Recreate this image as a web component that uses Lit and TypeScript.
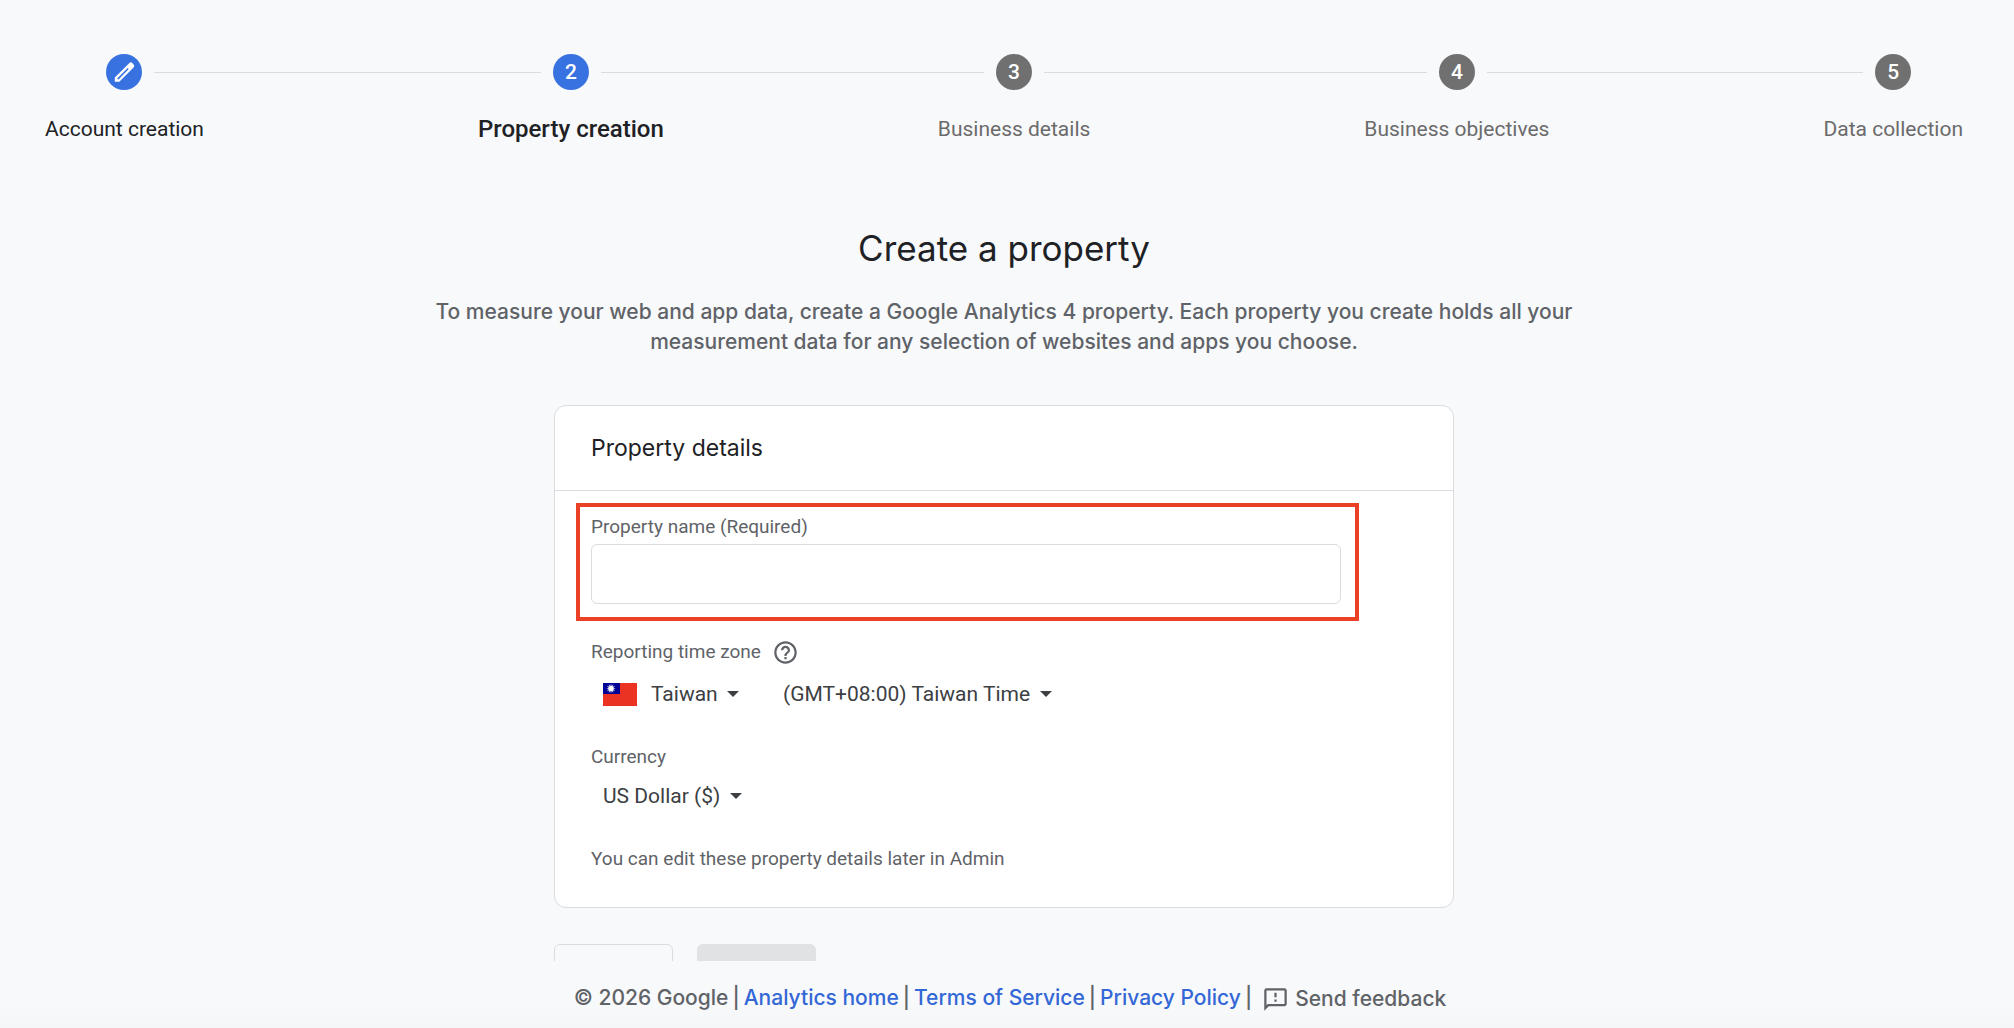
import { LitElement, html, css, svg, nothing } from "lit";
import { customElement, property } from "lit/decorators.js";
import { classMap } from "lit/directives/class-map.js";

type StepState = "done" | "current" | "upcoming";

interface Step {
  label: string;
  state: StepState;
}

const STEPS: Step[] = [
  { label: "Account creation", state: "done" },
  { label: "Property creation", state: "current" },
  { label: "Business details", state: "upcoming" },
  { label: "Business objectives", state: "upcoming" },
  { label: "Data collection", state: "upcoming" },
];

const LINKS = ["Analytics home", "Terms of Service", "Privacy Policy"];

const pencilIcon = html`<svg viewBox="0 0 24 24" width="26" height="26" aria-hidden="true">
  <path
    fill="currentColor"
    fill-rule="evenodd"
    d="M18.300 3.100a1.800 1.800 0 0 0-1.300.5L3.500 17V21h4.200L21 7.700a1.800 1.800 0 0 0 0-2.500L19.600 3.600a1.800 1.800 0 0 0-1.300-.5zM15.400 8.300l1 1L7.200 18.700H5.900v-1z"
  />
</svg>`;

const helpIcon = html`<svg viewBox="0 0 24 24" width="27" height="27" aria-hidden="true">
  <path
    fill="currentColor"
    d="M11 18h2v-2h-2v2zm1-16C6.480 2 2 6.480 2 12s4.480 10 10 10 10-4.480 10-10S17.520 2 12 2zm0 18c-4.410 0-8-3.590-8-8s3.590-8 8-8 8 3.590 8 8-3.590 8-8 8zm0-14c-2.210 0-4 1.790-4 4h2c0-1.100.9-2 2-2s2 .9 2 2c0 2-3 1.750-3 5h2c0-2.250 3-2.500 3-5 0-2.210-1.790-4-4-4z"
  />
</svg>`;

const feedbackIcon = html`<svg viewBox="0 0 24 24" width="27" height="27" aria-hidden="true">
  <path
    fill="currentColor"
    d="M20 2H4c-1.100 0-1.990.9-1.990 2L2 22l4-4h14c1.100 0 2-.9 2-2V4c0-1.100-.9-2-2-2zm0 14H5.170L4 17.170V4h16v12zM11 12h2v2h-2zm0-6h2v4h-2z"
  />
</svg>`;

const rays = Array.from({ length: 12 }, (_, i) => {
  const a = (i * Math.PI) / 6;
  const w = 0.26;
  const p = (r: number, t: number) => `${8 + r * Math.sin(t)},${5.5 - r * Math.cos(t)}`;
  return svg`<polygon fill="#fff" points="${p(4.8, a)} ${p(2.4, a + w)} ${p(2.4, a - w)}" />`;
});

const flagIcon = html`<svg viewBox="0 0 34 23" width="34" height="23" aria-hidden="true">
  <rect width="34" height="23" fill="#ea3323" />
  <rect width="17" height="11" fill="#000095" />
  ${rays}
  <circle cx="8" cy="5.5" r="2.6" fill="#fff" />
</svg>`;

@customElement("setup-stepper")
export class SetupStepper extends LitElement {
  @property({ attribute: false }) steps: Step[] = [];

  static styles = css`
    :host {
      display: block;
    }
    .steps {
      display: flex;
      margin: 0;
      padding: 0;
      list-style: none;
    }
    .step {
      flex: none;
      color: #6b6b6b;
    }
    .marker {
      display: flex;
      align-items: center;
      gap: 12px;
      margin-bottom: 24px;
    }
    .marker::before,
    .marker::after {
      content: "";
      flex: 1;
      height: 1px;
      background: #dadce0;
    }
    .step:first-child .marker::before,
    .step:last-child .marker::after {
      background: transparent;
    }
    .connector {
      flex: 1;
      height: 36px;
      display: flex;
      align-items: center;
    }
    .connector::before {
      content: "";
      flex: 1;
      height: 1px;
      background: #dadce0;
    }
    .circle {
      display: grid;
      place-items: center;
      width: 36px;
      height: 36px;
      border-radius: 50%;
      background: #707070;
      color: #fff;
      font-size: 21px;
      font-weight: 500;
      line-height: 36px;
    }
    .done .circle,
    .current .circle {
      background: #3871e0;
    }
    .label {
      font-size: 21px;
      line-height: 30px;
      white-space: nowrap;
    }
    .done .label,
    .current .label {
      color: #202124;
    }
    .current .label {
      font-size: 24px;
      font-weight: 500;
    }
  `;

  render() {
    return html`<ol class="steps">
      ${this.steps.map(
        (s, i) => html`${i > 0 ? html`<li class="connector" role="presentation"></li>` : nothing}
          <li
            class=${classMap({ step: true, [s.state]: true })}
            aria-current=${s.state === "current" ? "step" : nothing}
          >
            <div class="marker">
              <span class="circle">${s.state === "done" ? pencilIcon : i + 1}</span>
            </div>
            <div class="label">${s.label}</div>
          </li>`
      )}
    </ol>`;
  }
}

@customElement("app-root")
export class AppRoot extends LitElement {
  static styles = css`
    :host {
      display: flex;
      flex-direction: column;
      height: 100vh;
      box-sizing: border-box;
      background: #f8f9fb;
      color: #202124;
      font-family: Roboto, "Liberation Sans", sans-serif;
    }
    .content {
      flex: 1;
      min-height: 0;
      overflow-y: auto;
      scrollbar-width: none;
      padding-right: 6px;
    }
    .stepper {
      padding: 54px 45px 0;
    }
    .intro {
      max-width: 1180px;
      margin: 80px auto 48px;
      text-align: center;
      font-family: "Google Sans", Inter, Roboto, sans-serif;
    }
    .title {
      margin: 0 0 25px;
      font-size: 35px;
      font-weight: 400;
      line-height: 48px;
    }
    .lead {
      margin: 0;
      color: #5f6368;
      font-size: 21px;
      font-weight: 500;
      line-height: 30px;
    }
    .form {
      max-width: 900px;
      margin: 0 auto;
    }
    .card {
      background: #fff;
      border: 1px solid #dadce0;
      border-radius: 12px;
    }
    .card-title {
      margin: 0;
      padding: 24px 36px;
      border-bottom: 1px solid #dadce0;
      font-family: "Google Sans", Inter, Roboto, sans-serif;
      font-size: 23px;
      font-weight: 400;
      line-height: 36px;
    }
    .card-body {
      display: flex;
      flex-direction: column;
      gap: 31px;
      padding: 22px 36px 34px;
    }
    .label,
    .note {
      color: #5f6368;
      font-size: 19px;
      line-height: 28px;
    }
    .note {
      margin: 0;
    }
    .name-field {
      position: relative;
      display: flex;
      flex-direction: column;
      gap: 3px;
      max-width: 750px;
    }
    .name-field::after {
      content: "";
      position: absolute;
      inset: -10px -18px -17px -15px;
      border: 4px solid #ea4025;
      pointer-events: none;
    }
    .text-input {
      box-sizing: border-box;
      width: 100%;
      height: 60px;
      padding: 0 16px;
      border: 1px solid #dadce0;
      border-radius: 6px;
      background: #fff;
      color: inherit;
      font: inherit;
      font-size: 21px;
    }
    .group {
      display: flex;
      flex-direction: column;
      gap: 7px;
    }
    .label-row {
      display: flex;
      align-items: center;
      gap: 11px;
      height: 34px;
    }
    .help {
      display: grid;
      padding: 0;
      border: 0;
      background: none;
      color: #5f6368;
    }
    .pickers {
      display: flex;
      align-items: center;
      gap: 44px;
      padding-left: 12px;
    }
    .picker {
      display: flex;
      align-items: center;
      color: #3c4043;
    }
    .flag {
      display: grid;
      margin-right: 14px;
    }
    .select {
      appearance: none;
      height: 36px;
      margin: 0;
      padding: 0;
      border: 0;
      background: none;
      color: inherit;
      font: inherit;
      font-size: 21px;
    }
    .caret {
      width: 0;
      margin-left: 9px;
      border: 6px solid transparent;
      border-top-color: currentColor;
      border-bottom: 0;
      pointer-events: none;
    }
    .actions {
      display: flex;
      gap: 24px;
      padding: 36px 0;
    }
    .button {
      box-sizing: border-box;
      width: 119px;
      height: 54px;
      border: 1px solid #dadce0;
      border-radius: 6px;
      background: transparent;
    }
    .button:disabled {
      border-color: #e1e2e4;
      background: #e1e2e4;
    }
    .footer {
      display: flex;
      justify-content: center;
      align-items: center;
      gap: 10px;
      height: 67px;
      padding: 6px 0 0 6px;
      box-sizing: border-box;
      background: linear-gradient(#f8f9fb 60%, #f5f6f8);
      color: #5f6368;
      font-family: "Google Sans", Inter, Roboto, sans-serif;
      font-size: 21px;
      font-weight: 500;
      line-height: 30px;
      white-space: nowrap;
    }
    .legal {
      display: flex;
      gap: 4px;
    }
    .link {
      color: #3367d6;
      text-decoration: none;
    }
    .feedback {
      display: flex;
      align-items: center;
      gap: 6px;
      padding: 3px 0 0;
      border: 0;
      background: none;
      color: inherit;
      font: inherit;
    }
  `;

  private picker(id: string, name: string, value: string, flag: unknown = nothing) {
    return html`<span class="picker">
      ${flag}
      <select class="select" id=${id} aria-label=${name}>
        <option>${value}</option>
      </select>
      <span class="caret"></span>
    </span>`;
  }

  render() {
    return html`
      <main class="content">
        <setup-stepper class="stepper" .steps=${STEPS}></setup-stepper>
        <header class="intro">
          <h1 class="title">Create a property</h1>
          <p class="lead">
            To measure your web and app data, create a Google Analytics 4 property. Each property
            you create holds all your measurement data for any selection of websites and apps you
            choose.
          </p>
        </header>
        <form class="form">
          <section class="card">
            <h2 class="card-title">Property details</h2>
            <div class="card-body">
              <div class="name-field">
                <label class="label" for="name">Property name (Required)</label>
                <input class="text-input" id="name" type="text" required />
              </div>
              <div class="group">
                <div class="label-row">
                  <label class="label" for="country">Reporting time zone</label>
                  <button class="help" type="button" aria-label="Help">${helpIcon}</button>
                </div>
                <div class="pickers">
                  ${this.picker("country", "Country", "Taiwan", html`<span class="flag">${flagIcon}</span>`)}
                  ${this.picker("zone", "Time zone", "(GMT+08:00) Taiwan Time")}
                </div>
              </div>
              <div class="group">
                <label class="label" for="currency">Currency</label>
                <div class="pickers">${this.picker("currency", "Currency", "US Dollar ($)")}</div>
              </div>
              <p class="note">You can edit these property details later in Admin</p>
            </div>
          </section>
          <div class="actions">
            <button class="button" type="button" aria-label="Back"></button>
            <button class="button" type="submit" aria-label="Next" disabled></button>
          </div>
        </form>
      </main>
      <footer class="footer">
        <div class="legal">
          <span>© 2026 Google</span><span>|</span>
          ${LINKS.map((l) => html`<a class="link" href="#">${l}</a><span>|</span>`)}
        </div>
        <button class="feedback" type="button">${feedbackIcon} Send feedback</button>
      </footer>
    `;
  }
}
